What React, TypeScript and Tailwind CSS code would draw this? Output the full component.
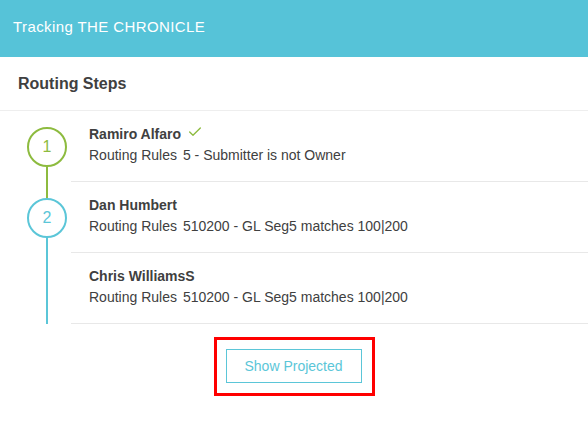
import { Check } from "lucide-react";

type Step = {
  name: string;
  rule: string;
  detail: string;
  num?: number;
  done?: boolean;
  top: string;
  bottom: string;
  ring?: string;
};

const steps: Step[] = [
  {
    name: "Ramiro Alfaro",
    rule: "Routing Rules",
    detail: "5 - Submitter is not Owner",
    num: 1,
    done: true,
    top: "bg-transparent",
    bottom: "bg-[#8dbb3f]",
    ring: "border-[#8dbb3f] text-[#8dbb3f]",
  },
  {
    name: "Dan Humbert",
    rule: "Routing Rules",
    detail: "510200 - GL Seg5 matches 100|200",
    num: 2,
    top: "bg-[#8dbb3f]",
    bottom: "bg-[#5bc6d8]",
    ring: "border-[#5bc6d8] text-[#5bc6d8]",
  },
  {
    name: "Chris WilliamsS",
    rule: "Routing Rules",
    detail: "510200 - GL Seg5 matches 100|200",
    top: "bg-[#5bc6d8]",
    bottom: "bg-[#5bc6d8]",
  },
];

const StepRow = ({ step }: { step: Step }) => {
  return (
    <div className="flex h-[71px]">
      <div className="w-[71px] pl-[27px]">
        <div className="w-10 h-full flex flex-col items-center">
          <div className={`w-[2px] flex-1 ${step.top}`} />
          {step.num && (
            <div
              className={`w-10 h-10 shrink-0 rounded-full border-2 flex items-center justify-center text-[16px] ${step.ring}`}
            >
              {step.num}
            </div>
          )}
          <div className={`w-[2px] flex-1 ${step.bottom}`} />
        </div>
      </div>
      <div className="flex-1 border-b border-[#e8e8e8] pl-[18px] pt-[13px]">
        <div className="flex items-center gap-[6px] leading-5 text-[14px] font-bold text-[#404040]">
          {step.name}
          {step.done && (
            <Check size={16} strokeWidth={2} className="text-[#8dbb3f] -mt-[5px]" />
          )}
        </div>
        <div className="leading-5 mt-px text-[14px] text-[#404040]">
          {step.rule}
          <span className="ml-[6px]">{step.detail}</span>
        </div>
      </div>
    </div>
  );
};

const App = () => {
  return (
    <div className="w-[588px] h-[437px] bg-white font-['Liberation_Sans',Arial,sans-serif] overflow-hidden">
      <header className="h-[57px] bg-[#56c3d8] flex items-center pl-[13px] pb-[2px]">
        <h1 className="text-white text-[15px] tracking-[0.4px]">Tracking THE CHRONICLE</h1>
      </header>
      <div className="h-[54px] flex items-center pl-[18px] border-b border-[#eeeeee]">
        <h2 className="text-[16px] font-bold text-[#404040]">Routing Steps</h2>
      </div>
      <div>
        {steps.map((s) => (
          <StepRow key={s.name} step={s} />
        ))}
      </div>
      <div className="flex justify-center mt-[13px]">
        <div className="border-[3px] border-[#ff0000] p-[9px] pr-[10px] pb-[10px]">
          <button className="w-[136px] h-[34px] border border-[#5bc6d8] text-[#5bc6d8] text-[14px]">
            Show Projected
          </button>
        </div>
      </div>
    </div>
  );
};

export default App;
